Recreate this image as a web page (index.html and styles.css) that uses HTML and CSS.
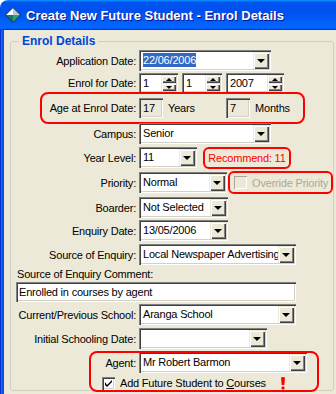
FILE: index.html
```html
<!DOCTYPE html>
<html lang="en">
<head>
  <meta charset="UTF-8">
  <meta name="viewport" content="width=device-width, initial-scale=1.0">
  <title>Create New Future Student - Enrol Details</title>
  <link rel="stylesheet" href="styles.css">
</head>
<body>
  <div class="window">
    <div class="titlebar">
      <svg class="app-icon" width="16" height="16" viewBox="0 0 16 16">
        <polygon points="8,0.5 0.5,8 8,8" fill="#ffffff"/>
        <polygon points="8,0.5 15.5,8 8,8" fill="#b9cbd6"/>
        <polygon points="0.5,8 8,15.5 8,8" fill="#1b7560"/>
        <polygon points="15.5,8 8,15.5 8,8" fill="#2f9f78"/>
        <polygon points="8,0.5 15.5,8 8,15.5 0.5,8" fill="none" stroke="#0b3550" stroke-width="1"/>
      </svg>
      <span class="title">Create New Future Student - Enrol Details</span>
    </div>

    <div class="client">
      <fieldset class="group">
        <legend>Enrol Details</legend>

        <!-- application / enrol dates -->
        <div class="row mt1">
          <span class="cap">Application Date:</span>
          <div class="combo w132"><span class="val"><span class="sel">22/06/2006</span></span><span class="drop"></span></div>
        </div>

        <div class="row short mt2">
          <span class="cap">Enrol for Date:</span>
          <div class="spins">
            <div class="spin w39"><span class="val">1</span><span class="arrows"><span class="up"></span><span class="down"></span></span></div>
            <div class="spin w40"><span class="val">1</span><span class="arrows"><span class="up"></span><span class="down"></span></span></div>
            <div class="spin w58"><span class="val">2007</span><span class="arrows"><span class="up"></span><span class="down"></span></span></div>
          </div>
        </div>

        <div class="row short mt5 age">
          <span class="cap">Age at Enrol Date:</span>
          <span class="ro">17</span>
          <span class="unit">Years</span>
          <span class="ro">7</span>
          <span class="unit">Months</span>
        </div>

        <div class="row mt5">
          <span class="cap">Campus:</span>
          <div class="combo w132"><span class="val">Senior</span><span class="drop"></span></div>
        </div>

        <div class="row">
          <span class="cap">Year Level:</span>
          <div class="combo w58"><span class="val">11</span><span class="drop"></span></div>
          <span class="note">Recommend: 11</span>
        </div>

        <div class="row mt4">
          <span class="cap">Priority:</span>
          <div class="combo w89"><span class="val">Normal</span><span class="drop"></span></div>
          <span class="override"><span class="check off"></span>Override Priority</span>
        </div>

        <div class="row mt4">
          <span class="cap">Boarder:</span>
          <div class="combo w89"><span class="val">Not Selected</span><span class="drop"></span></div>
        </div>

        <div class="row mt2">
          <span class="cap">Enquiry Date:</span>
          <div class="combo w89"><span class="val">13/05/2006</span><span class="drop"></span></div>
        </div>

        <div class="row">
          <span class="cap">Source of Enquiry:</span>
          <div class="combo w157"><span class="val">Local Newspaper Advertising</span><span class="drop"></span></div>
        </div>

        <!-- comment -->
        <div class="plain mt2">Source of Enquiry Comment:</div>
        <div class="textbox">Enrolled in courses by agent</div>

        <div class="row mt2">
          <span class="cap">Current/Previous School:</span>
          <div class="combo w157"><span class="val">Aranga School</span><span class="drop"></span></div>
        </div>

        <div class="row">
          <span class="cap">Initial Schooling Date:</span>
          <div class="combo w128"><span class="val"></span><span class="drop"></span></div>
        </div>

        <!-- agent -->
        <div class="flagged">
          <div class="row">
            <span class="cap">Agent:</span>
            <div class="combo w168"><span class="val">Mr Robert Barmon</span><span class="drop"></span></div>
          </div>
          <div class="checkrow">
            <span class="check">
              <svg width="7" height="7" viewBox="0 0 7 7"><path d="M0 2v3l2 2l5-5v-2l-5 5z" fill="#000"/></svg>
            </span>
            <span>Add Future Student to <u>C</u>ourses</span>
            <svg class="alert" width="6" height="13" viewBox="0 0 6 13">
              <path d="M1 0.5q2-1 4 0l-0.7 7.5h-2.6z" fill="#ff0000"/>
              <rect x="1.5" y="9.5" width="3" height="3" rx="1.2" fill="#ff0000"/>
            </svg>
          </div>
        </div>
      </fieldset>
    </div>
  </div>
</body>
</html>
```

FILE: styles.css
```css
* {
  box-sizing: border-box;
}

body {
  margin: 0;
  width: 336px;
  height: 394px;
  overflow: hidden;
  background: #fff;
  font-family: "Liberation Sans", Arial, sans-serif;
  font-size: 11px;
  letter-spacing: -0.2px;
  color: #000;
}

.window {
  height: 394px;
  display: flex;
  flex-direction: column;
}

.titlebar {
  flex: none;
  height: 30px;
  display: flex;
  align-items: center;
  gap: 5px;
  padding-left: 5px;
  border-top-left-radius: 8px;
  background: linear-gradient(180deg, #0997ff, #0053ee 8%, #0050ee 40%, #06f 88%, #06f 93%, #005bff 95%, #003dd7 96%, #003dd7);
  color: #fff;
  font-size: 13px;
  font-weight: bold;
  letter-spacing: 0;
  text-shadow: 1px 1px #0f1089;
}

.app-icon {
  flex: none;
}

.client {
  flex: 1;
  padding-left: 4px;
  background: #ece9d8;
  box-shadow: inset 1px 0 #0831d9, inset 2px 0 #166aee, inset 4px 0 #0855dd;
}

.group {
  width: 324px;
  margin: 3px 0 0 6px;
  padding: 0;
  min-width: 0;
  border: 1px solid #d0d0bf;
  border-radius: 3px;
}

.group legend {
  margin-left: 8px;
  padding: 0 3px;
  color: #0046d5;
  font-size: 12px;
  font-weight: bold;
  line-height: 16px;
  letter-spacing: 0;
}

/* form rows */
.row {
  position: relative;
  display: flex;
  align-items: center;
  height: 21px;
  margin-top: 3px;
}

.row.short {
  height: 20px;
}

.mt1 { margin-top: 1px; }
.mt2 { margin-top: 2px; }
.mt4 { margin-top: 4px; }
.mt5 { margin-top: 5px; }

.cap {
  flex: none;
  width: 125px;
  margin-right: 3px;
  text-align: right;
  white-space: nowrap;
}

/* sunken field + raised button */
.combo,
.spin,
.textbox,
.ro {
  box-shadow: inset 1px 1px #808080, inset 2px 2px #404040, inset -1px -1px #fff, inset -2px -2px #d4d0c8;
}

.combo {
  display: flex;
  height: 21px;
  padding: 2px;
  background: #fff;
}

.w39 { width: 39px; }
.w40 { width: 40px; }
.w58 { width: 58px; }
.w89 { width: 89px; }
.w128 { width: 128px; }
.w132 { width: 132px; }
.w157 { width: 157px; }
.w168 { width: 168px; }

.val {
  flex: 1;
  min-width: 0;
  padding-left: 2px;
  line-height: 17px;
  white-space: nowrap;
  overflow: hidden;
}

.sel {
  padding: 1px 0;
  background: #316ac5;
  color: #fff;
}

.drop,
.arrows span {
  display: flex;
  align-items: center;
  justify-content: center;
  background: #ece9d8;
  box-shadow: inset 1px 1px #ece9d8, inset 2px 2px #fff, inset -1px -1px #404040, inset -2px -2px #808080;
}

.drop {
  flex: none;
  width: 16px;
}

.drop::after {
  content: "";
  border-style: solid;
  border-width: 4px 4px 0;
  border-color: #000 transparent transparent;
}

.spins {
  display: flex;
  gap: 4px;
}

.spin {
  display: flex;
  height: 20px;
  padding: 2px;
  background: #fff;
}

.spin .val {
  line-height: 16px;
}

.arrows {
  flex: none;
  width: 15px;
  display: flex;
  flex-direction: column;
}

.arrows span {
  flex: 1;
}

.arrows .up::after,
.arrows .down::after {
  content: "";
  border-style: solid;
}

.arrows .up::after {
  border-width: 0 3px 3px;
  border-color: transparent transparent #000;
}

.arrows .down::after {
  border-width: 3px 3px 0;
  border-color: #000 transparent transparent;
}

/* age */
.ro {
  flex: none;
  width: 24px;
  height: 20px;
  padding: 2px 0 0 4px;
  line-height: 16px;
  background: #ece9d8;
}

.unit {
  flex: none;
  width: 58px;
  margin-left: 5px;
}

.age::after,
.flagged::after {
  content: "";
  position: absolute;
  border: 2px solid #ff0000;
  border-radius: 8px;
  pointer-events: none;
}

.age::after {
  left: 29px;
  top: -6px;
  width: 261px;
  height: 28px;
}

.note {
  width: 88px;
  height: 22px;
  margin-left: 6px;
  display: flex;
  align-items: center;
  justify-content: center;
  border: 2px solid #ff0000;
  border-radius: 6px;
  color: #ff0000;
}

.override {
  width: 106px;
  height: 23px;
  margin-left: 1px;
  padding-left: 4px;
  display: flex;
  align-items: center;
  gap: 5px;
  border: 2px solid #ff0000;
  border-radius: 6px;
  color: #aca899;
  white-space: nowrap;
}

/* checkboxes */
.check {
  flex: none;
  width: 13px;
  height: 13px;
  display: flex;
  align-items: center;
  justify-content: center;
  background: #fff;
  box-shadow: inset 1px 1px #808080, inset 2px 2px #404040, inset -1px -1px #fff, inset -2px -2px #d4d0c8;
}

.check.off {
  background: #ece9d8;
  box-shadow: inset 1px 1px #aca899, inset -1px -1px #fff;
}

/* comment */
.plain {
  height: 14px;
  padding-left: 6px;
  line-height: 14px;
}

.textbox {
  width: 280px;
  height: 20px;
  margin: 1px 0 0 5px;
  padding: 2px 3px;
  line-height: 16px;
  background: #fff;
}

/* agent */
.flagged {
  position: relative;
}

.flagged::after {
  left: 78px;
  top: -1px;
  width: 226px;
  bottom: -2px;
}

.checkrow {
  display: flex;
  align-items: center;
  gap: 5px;
  height: 14px;
  margin: 3px 0 0 91px;
}

.alert {
  margin-left: 9px;
}
```
